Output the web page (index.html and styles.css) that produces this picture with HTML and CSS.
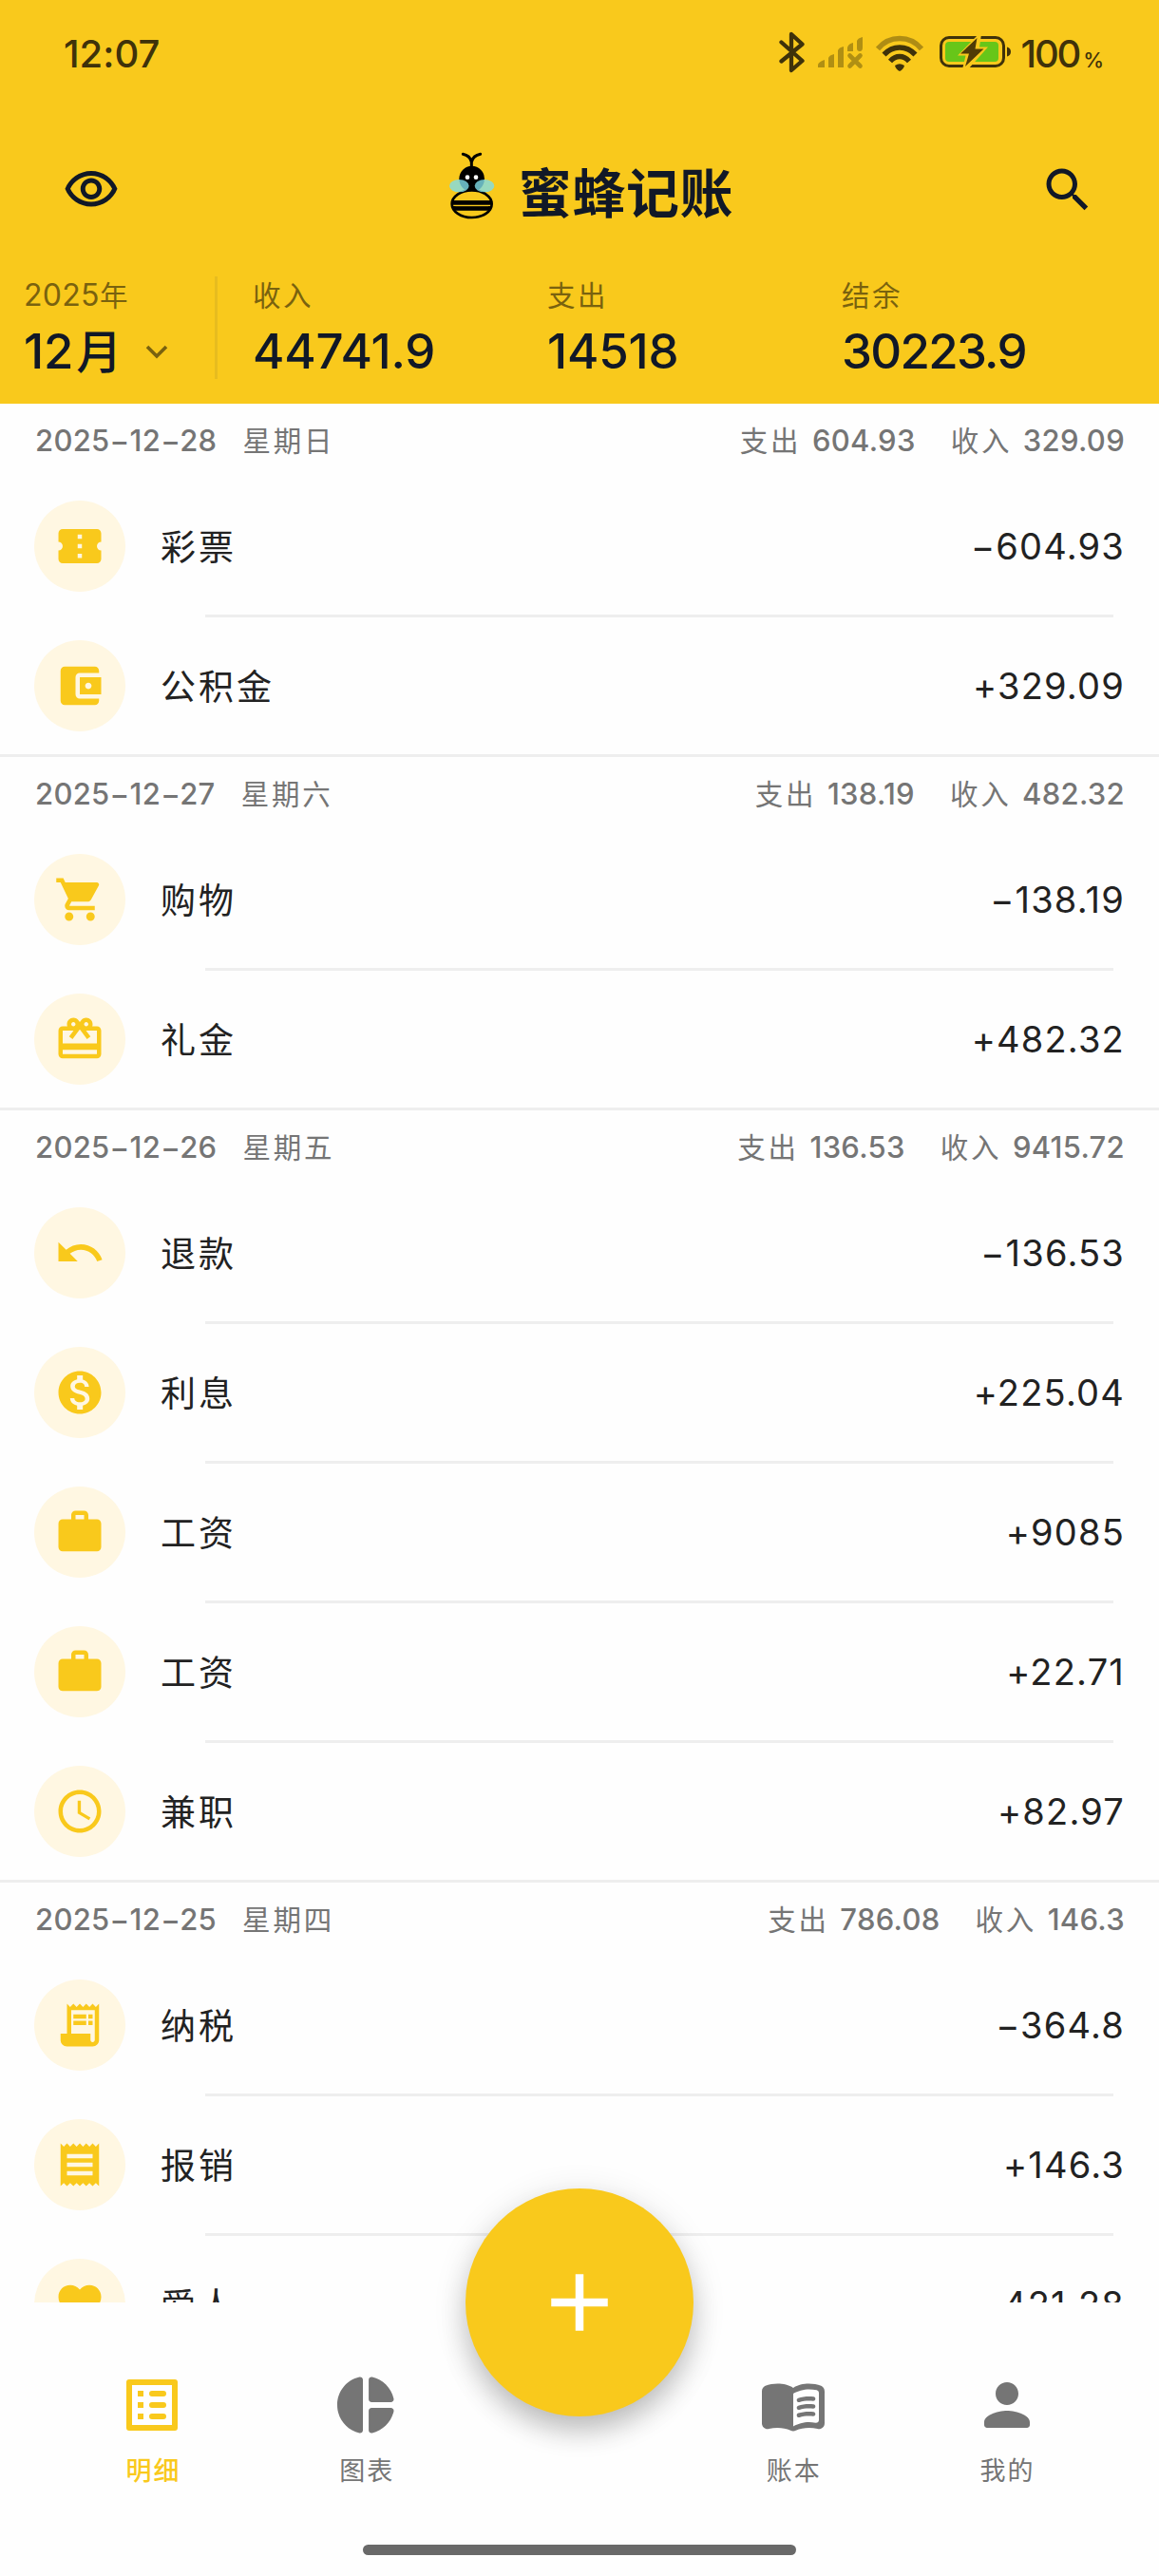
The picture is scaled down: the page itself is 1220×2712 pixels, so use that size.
FILE: index.html
```html
<!DOCTYPE html>
<html lang="zh-CN">
<head>
<meta charset="utf-8">
<title>蜜蜂记账</title>
<link rel="stylesheet" href="styles.css">
</head>
<body>
<svg class="sprite" aria-hidden="true">
  <symbol id="ticket" viewBox="0 0 24 24"><path d="M22 10V6c0-1.11-.9-2-2-2H4c-1.1 0-1.99.89-1.99 2v4c1.1 0 1.99.9 1.99 2s-.89 2-2 2v4c0 1.1.9 2 2 2h16c1.1 0 2-.9 2-2v-4c-1.1 0-2-.9-2-2s.9-2 2-2m-9 7.5h-2v-2h2zm0-4.5h-2v-2h2zm0-4.5h-2v-2h2z"/></symbol>
  <symbol id="wallet" viewBox="0 0 24 24"><path d="M21 18v1c0 1.1-.9 2-2 2H5c-1.11 0-2-.9-2-2V5c0-1.1.89-2 2-2h14c1.1 0 2 .9 2 2v1h-9c-1.11 0-2 .9-2 2v8c0 1.1.89 2 2 2zm-9-2h10V8H12zm4-2.5c-.83 0-1.5-.67-1.5-1.5s.67-1.5 1.5-1.5 1.5.67 1.5 1.5-.67 1.5-1.5 1.5"/></symbol>
  <symbol id="cart" viewBox="0 0 24 24"><path d="M7 18c-1.1 0-1.99.9-1.99 2S5.9 22 7 22s2-.9 2-2-.9-2-2-2M1 2v2h2l3.6 7.59-1.35 2.45c-.16.28-.25.61-.25.96 0 1.1.9 2 2 2h12v-2H7.42c-.14 0-.25-.11-.25-.25l.03-.12.9-1.63h7.45c.75 0 1.41-.41 1.75-1.03l3.58-6.49c.08-.14.12-.31.12-.48 0-.55-.45-1-1-1H5.21l-.94-2zm16 16c-1.1 0-1.99.9-1.99 2s.89 2 1.99 2 2-.9 2-2-.9-2-2-2"/></symbol>
  <symbol id="gift" viewBox="0 0 24 24"><path d="M20 6h-2.18c.11-.31.18-.65.18-1 0-1.66-1.34-3-3-3-1.05 0-1.96.54-2.5 1.35l-.5.67-.5-.68C10.96 2.54 10.05 2 9 2 7.34 2 6 3.34 6 5c0 .35.07.69.18 1H4c-1.11 0-1.99.89-1.99 2L2 19c0 1.11.89 2 2 2h16c1.11 0 2-.89 2-2V8c0-1.11-.89-2-2-2zm-5-2c.55 0 1 .45 1 1s-.45 1-1 1-1-.45-1-1 .45-1 1-1zM9 4c.55 0 1 .45 1 1s-.45 1-1 1-1-.45-1-1 .45-1 1-1zm11 15H4v-2h16v2zm0-5H4V8h5.08L7 10.83 8.62 12 11 8.76l1-1.36 1 1.36L15.38 12 17 10.83 14.92 8H20v6z"/></symbol>
  <symbol id="undo" viewBox="0 0 24 24"><path d="M12.5 8c-2.65 0-5.05.99-6.9 2.6L2 7v9h9l-3.62-3.62c1.39-1.16 3.16-1.88 5.12-1.88 3.54 0 6.55 2.31 7.6 5.5l2.37-.78C21.08 11.03 17.15 8 12.5 8"/></symbol>
  <symbol id="coin" viewBox="0 0 24 24"><path d="M12 2C6.48 2 2 6.48 2 12s4.48 10 10 10 10-4.48 10-10S17.52 2 12 2m1.41 16.09V20h-2.67v-1.93c-1.71-.36-3.16-1.46-3.27-3.4h1.96c.1 1.05.82 1.87 2.65 1.87 1.96 0 2.4-.98 2.4-1.59 0-.83-.44-1.61-2.67-2.14-2.48-.6-4.18-1.62-4.18-3.67 0-1.72 1.39-2.84 3.11-3.21V4h2.67v1.95c1.86.45 2.79 1.86 2.85 3.39H14.3c-.05-1.11-.64-1.87-2.22-1.87-1.5 0-2.4.68-2.4 1.64 0 .84.65 1.39 2.67 1.91s4.18 1.39 4.18 3.91c-.01 1.83-1.38 2.83-3.12 3.16"/></symbol>
  <symbol id="work" viewBox="0 0 24 24"><path d="M20 6h-4V4c0-1.11-.89-2-2-2h-4c-1.11 0-2 .89-2 2v2H4c-1.11 0-1.99.89-1.99 2L2 19c0 1.11.89 2 2 2h16c1.11 0 2-.89 2-2V8c0-1.11-.89-2-2-2m-6 0h-4V4h4z"/></symbol>
  <symbol id="clock" viewBox="0 0 24 24"><path d="M11.99 2C6.47 2 2 6.48 2 12s4.47 10 9.99 10C17.52 22 22 17.52 22 12S17.52 2 11.99 2M12 20c-4.42 0-8-3.58-8-8s3.58-8 8-8 8 3.58 8 8-3.58 8-8 8m.5-13H11v6l5.25 3.15.75-1.23-4.5-2.67z"/></symbol>
  <symbol id="receipt-long" viewBox="0 0 24 24"><path d="M19.5 3.5 18 2l-1.5 1.5L15 2l-1.5 1.5L12 2l-1.5 1.5L9 2 7.5 3.5 6 2v14H3v3c0 1.66 1.34 3 3 3h12c1.66 0 3-1.34 3-3V2zM19 19c0 .55-.45 1-1 1s-1-.45-1-1v-3H8V5h11z"/><path d="M9 7h6v2H9zM16 7h2v2h-2zM9 10h6v2H9zM16 10h2v2h-2z"/></symbol>
  <symbol id="receipt" viewBox="0 0 24 24"><path d="M18 17H6v-2h12zm0-4H6v-2h12zm0-4H6V7h12zM3 22l1.5-1.5L6 22l1.5-1.5L9 22l1.5-1.5L12 22l1.5-1.5L15 22l1.5-1.5L18 22l1.5-1.5L21 22V2l-1.5 1.5L18 2l-1.5 1.5L15 2l-1.5 1.5L12 2l-1.5 1.5L9 2 7.5 3.5 6 2 4.5 3.5 3 2z"/></symbol>
  <symbol id="heart" viewBox="0 0 24 24"><path d="m12 21.35-1.45-1.32C5.4 15.36 2 12.28 2 8.5 2 5.42 4.42 3 7.5 3c1.74 0 3.41.81 4.5 2.09C13.09 3.81 14.76 3 16.5 3 19.58 3 22 5.42 22 8.5c0 3.78-3.4 6.86-8.55 11.54z"/></symbol>
</svg>

<header class="header">
  <div class="status">
    <span class="status-time">12:07</span>
    <div class="status-icons">
      <svg class="bluetooth" viewBox="0 0 27 44"><path d="M2.500 11.500 24.500 31 13 41V3l11.500 10.500L2.500 31.500" fill="none" stroke="currentColor" stroke-width="4.300" stroke-linejoin="round" stroke-linecap="round"/></svg>
      <svg class="signal" viewBox="0 0 50 36"><path d="M1 29q1-3 7-5v8H1zM12 22q1-3 6-4v14h-6zM22 14q1-3 6-4v22h-6zM32 11q1-4 6-5v9h-6zM42 4q1-3 6-4v11q0 4-3 4t-3-3z"/><path d="m34.500 19.500 11 11m0-11-11 11" fill="none" stroke="currentColor" stroke-width="4.600" stroke-linecap="round"/></svg>
      <svg class="wifi" viewBox="0 0 50 38"><g fill="none" stroke="currentColor" stroke-width="5.500"><path opacity=".4" d="M2 14.500Q11 3.500 25 3.500T48 14.500"/><path d="M8.500 20.500Q15.500 13 25 13T41.500 20.500"/><path d="M15 27.500Q19.500 22.500 25 22.500t10 5"/></g><path d="M20 32q5-3.500 10 0-1 4-5 6-4-2-5-6"/></svg>
      <svg class="battery" viewBox="0 0 76 38"><rect x="1.500" y="3.500" width="66" height="30" rx="8.500" fill="none" stroke="currentColor" stroke-width="3"/><rect x="6" y="8" width="56" height="21" rx="4" fill="#67c619"/><path d="M71 13.500q4 1 4 5t-4 5z"/><path d="M41 0 19 22.500h8.500L24 37h6L51 13.500h-9L44 0z" fill="#f9c91c"/><path d="M39.500 4 22 20.500h9L27 34l19.500-18.500h-9z" fill="#4f3c06"/></svg>
      <span class="status-level">100<small>%</small></span>
    </div>
  </div>

  <div class="appbar">
    <svg class="appbar-icon" viewBox="0 0 24 24"><path d="M12 6c3.790 0 7.170 2.130 8.820 5.500C19.170 14.870 15.790 17 12 17s-7.170-2.130-8.820-5.500C4.830 8.130 8.210 6 12 6m0-2C7 4 2.730 7.110 1 11.500 2.730 15.890 7 19 12 19s9.270-3.110 11-7.500C21.270 7.110 17 4 12 4m0 5c1.380 0 2.500 1.120 2.500 2.500S13.380 14 12 14s-2.500-1.120-2.500-2.500S10.620 9 12 9m0-2c-2.480 0-4.500 2.020-4.500 4.500S9.520 16 12 16s4.500-2.020 4.500-4.500S14.480 7 12 7"/></svg>
    <div class="brand">
      <svg class="bee" viewBox="90 54 156 222">
        <path d="M142 67q22 4 27 25v14m0-14q5-21 28-25" fill="none" stroke="#000" stroke-width="9" stroke-linecap="round"/>
        <ellipse cx="170" cy="145" rx="40" ry="41"/>
        <circle cx="156" cy="140" r="7" fill="#fff"/><circle cx="183" cy="140" r="7" fill="#fff"/>
        <ellipse cx="170" cy="224" rx="63" ry="43" fill="#f9c91c" stroke="#000" stroke-width="8"/>
        <path d="M108 220h124M111 238h118" stroke="#000" stroke-width="14"/>
        <path d="M118 230h104" stroke="#f9c91c" stroke-width="2.500"/>
        <ellipse cx="130" cy="167" rx="31" ry="20" fill="#7fdde8" fill-opacity=".8"/>
        <ellipse cx="210" cy="167" rx="31" ry="20" fill="#7fdde8" fill-opacity=".8"/>
      </svg>
      <h1>蜜蜂记账</h1>
    </div>
    <svg class="appbar-icon" viewBox="0 0 24 24"><path d="M15.500 14h-.790l-.280-.270C15.410 12.590 16 11.110 16 9.500 16 5.910 13.090 3 9.500 3S3 5.910 3 9.500 5.910 16 9.500 16c1.610 0 3.090-.590 4.230-1.570l.270.280v.790l5 4.990L20.490 19zm-6 0C7.010 14 5 11.990 5 9.500S7.010 5 9.500 5 14 7.010 14 9.500 11.990 14 9.500 14"/></svg>
  </div>

  <div class="summary">
    <div class="month">
      <div class="label">2025<span class="zh">年</span></div>
      <div class="value">12<span class="zh">月</span><svg class="chevron" viewBox="0 0 24 15"><path d="m2 2 10 10L22 2" fill="none" stroke="currentColor" stroke-width="3.600"/></svg></div>
    </div>
    <div class="stat"><div class="label"><span class="zh">收入</span></div><div class="value">44741.9</div></div>
    <div class="stat"><div class="label"><span class="zh">支出</span></div><div class="value">14518</div></div>
    <div class="stat balance"><div class="label"><span class="zh">结余</span></div><div class="value">30223.9</div></div>
  </div>
</header>

<main class="list">
  <section class="day">
    <div class="day-head"><span>2025−12−28</span><span class="zh">星期日</span><div class="totals"><span><span class="zh">支出</span> 604.93</span><span><span class="zh">收入</span> 329.09</span></div></div>
    <div class="row"><i class="badge"><svg><use href="#ticket"/></svg></i><span class="name">彩票</span><span class="amount">−604.93</span></div>
    <div class="row"><i class="badge"><svg><use href="#wallet"/></svg></i><span class="name">公积金</span><span class="amount">+329.09</span></div>
  </section>
  <section class="day">
    <div class="day-head"><span>2025−12−27</span><span class="zh">星期六</span><div class="totals"><span><span class="zh">支出</span> 138.19</span><span><span class="zh">收入</span> 482.32</span></div></div>
    <div class="row"><i class="badge"><svg><use href="#cart"/></svg></i><span class="name">购物</span><span class="amount">−138.19</span></div>
    <div class="row"><i class="badge"><svg><use href="#gift"/></svg></i><span class="name">礼金</span><span class="amount">+482.32</span></div>
  </section>
  <section class="day">
    <div class="day-head"><span>2025−12−26</span><span class="zh">星期五</span><div class="totals"><span><span class="zh">支出</span> 136.53</span><span><span class="zh">收入</span> 9415.72</span></div></div>
    <div class="row"><i class="badge"><svg><use href="#undo"/></svg></i><span class="name">退款</span><span class="amount">−136.53</span></div>
    <div class="row"><i class="badge"><svg><use href="#coin"/></svg></i><span class="name">利息</span><span class="amount">+225.04</span></div>
    <div class="row"><i class="badge"><svg><use href="#work"/></svg></i><span class="name">工资</span><span class="amount">+9085</span></div>
    <div class="row"><i class="badge"><svg><use href="#work"/></svg></i><span class="name">工资</span><span class="amount">+22.71</span></div>
    <div class="row"><i class="badge"><svg><use href="#clock"/></svg></i><span class="name">兼职</span><span class="amount">+82.97</span></div>
  </section>
  <section class="day">
    <div class="day-head"><span>2025−12−25</span><span class="zh">星期四</span><div class="totals"><span><span class="zh">支出</span> 786.08</span><span><span class="zh">收入</span> 146.3</span></div></div>
    <div class="row"><i class="badge"><svg><use href="#receipt-long"/></svg></i><span class="name">纳税</span><span class="amount">−364.8</span></div>
    <div class="row"><i class="badge"><svg><use href="#receipt"/></svg></i><span class="name">报销</span><span class="amount">+146.3</span></div>
    <div class="row"><i class="badge"><svg><use href="#heart"/></svg></i><span class="name">爱人</span><span class="amount">−421.28</span></div>
  </section>
</main>

<nav class="tabbar">
  <div class="tabs">
    <a class="tab active"><svg viewBox="0 0 24 24"><path fill-rule="evenodd" d="M4 3h16q1 0 1 1v16q0 1-1 1H4q-1 0-1-1V4q0-1 1-1m1 2v14h14V5z"/><path d="M7 7h2v2H7zM7 11h2v2H7zM7 15h2v2H7z"/><path d="M12 8h4m-4 4h4m-4 4h4" stroke="currentColor" stroke-width="2" stroke-linecap="round"/></svg><span>明细</span></a>
    <a class="tab"><svg viewBox="0 0 24 24"><path d="M11 3.180v17.640c0 .640-.590 1.120-1.210.980C5.320 20.800 2 16.790 2 12s3.320-8.800 7.790-9.800c.620-.140 1.210.340 1.210.980m2.030 0v6.810c0 .550.450 1 1 1h6.790c.640 0 1.120-.590.980-1.220-.850-3.760-3.800-6.720-7.550-7.570-.630-.140-1.220.340-1.220.980m0 10.830v6.810c0 .640.590 1.120 1.220.980 3.760-.850 6.710-3.820 7.560-7.580.140-.620-.350-1.220-.980-1.220h-6.790c-.560.010-1.010.460-1.010 1.010"/></svg><span>图表</span></a>
    <button class="fab" aria-label="记一笔"><svg viewBox="0 0 24 24"><path d="M19 13h-6v6h-2v-6H5v-2h6V5h2v6h6z"/></svg></button>
    <a class="tab"><svg viewBox="0 0 24 24"><path d="M17.500 4.500c-1.950 0-4.050.400-5.500 1.500-1.450-1.100-3.550-1.500-5.500-1.500-1.450 0-2.990.220-4.280.790C1.490 5.610 1 6.330 1 7.130v11.280c0 1.300 1.220 2.260 2.480 1.940.980-.250 2.020-.350 3.020-.350 1.560 0 3.220.260 4.560.920.600.300 1.280.300 1.870 0 1.340-.670 3-.920 4.560-.920 1 0 2.040.100 3.020.350 1.260.330 2.480-.630 2.480-1.940V7.130c0-.810-.490-1.520-1.220-1.840-1.280-.570-2.820-.790-4.270-.790M21 17.230c0 .630-.580 1.090-1.200.980-.750-.140-1.530-.200-2.300-.200-1.700 0-4.150.650-5.500 1.500V8c1.350-.850 3.800-1.500 5.500-1.500.920 0 1.830.090 2.700.280.460.100.800.510.800.980z"/><path id="ln" d="M13.980 11.010c-.320 0-.610-.200-.710-.520-.130-.390.090-.820.480-.940 1.540-.500 3.530-.660 5.360-.450.410.050.710.420.660.830s-.420.710-.830.660c-1.620-.190-3.390-.040-4.730.390-.080.010-.160.030-.230.030"/><use href="#ln" y="2.660"/><use href="#ln" y="5.320"/></svg><span>账本</span></a>
    <a class="tab"><svg viewBox="0 0 24 24"><path d="M12 12c2.210 0 4-1.790 4-4s-1.790-4-4-4-4 1.790-4 4 1.790 4 4 4m0 2c-2.670 0-8 1.340-8 4v1c0 .550.450 1 1 1h14c.550 0 1-.450 1-1v-1c0-2.660-5.330-4-8-4"/></svg><span>我的</span></a>
  </div>
  <div class="home-indicator"></div>
</nav>
</body>
</html>
```

FILE: styles.css
```css
* { box-sizing: border-box; }

body {
  margin: 0;
  width: 1220px;
  height: 2712px;
  overflow: hidden;
  display: flex;
  flex-direction: column;
  background: #fefefe;
  color: #222;
  font-family: Inter, "Noto Sans CJK SC", sans-serif;
  font-feature-settings: "calt" 0;
}

svg { display: block; fill: currentColor; }
.sprite { display: none; }
.zh { font-family: "Noto Sans CJK SC", sans-serif; line-height: 1; }

/* Header */
.header {
  flex: none;
  height: 425px;
  background: #f9c91c;
  color: #111827;
}

.status {
  height: 112px;
  padding: 1px 58px 0 67px;
  display: flex;
  justify-content: space-between;
  align-items: center;
  color: #3f320a;
  font-size: 40px;
  font-weight: 500;
  line-height: 48px;
}
.status-icons { display: flex; align-items: center; }
.bluetooth { width: 27px; height: 44px; margin: -3px 13px 0 0; }
.signal { width: 50px; height: 36px; color: #b08f13; margin-right: 12px; }
.wifi { width: 50px; height: 38px; margin: -2px 17px 0 0; }
.battery { width: 76px; height: 38px; margin: -3px 9px 0 0; }
.status-level { display: flex; align-items: baseline; letter-spacing: -2.2px; }
.status-level small { font-size: 22px; margin-left: 4px; letter-spacing: 0; line-height: 1; }

.appbar {
  height: 176px;
  padding: 0 66px;
  display: grid;
  grid-template-columns: 60px 1fr 60px;
  align-items: center;
}
.appbar-icon { width: 60px; height: 60px; }
.brand {
  display: flex;
  justify-content: center;
  align-items: center;
  gap: 24px;
  padding-left: 22px;
}
.bee { width: 52px; height: 74px; margin-top: -10px; fill: #000; }
.brand h1 {
  margin: 0;
  font: 700 56px/80px "Noto Sans CJK SC", sans-serif;
  letter-spacing: 0.6px;
}

.summary {
  display: grid;
  grid-template-columns: 229px 310px 310px 1fr;
}
.month {
  height: 108px;
  margin-top: 3px;
  padding-left: 25px;
  border-right: 3px solid #e7bc1f;
}
.stat { margin-top: 3px; padding-left: 37px; }
.label {
  height: 40px;
  line-height: 40px;
  font-size: 32px;
  color: #79620f;
  white-space: nowrap;
}
.label .zh { font-size: 29.5px; letter-spacing: 2.5px; }
.month .label { letter-spacing: 0.3px; }
.value {
  height: 60px;
  margin-top: 9px;
  line-height: 60px;
  font-size: 51px;
  font-weight: 500;
  letter-spacing: -0.2px;
  white-space: nowrap;
}
.balance .value { letter-spacing: -1.7px; }
.month .value { display: flex; align-items: baseline; }
.value .zh { font-size: 48px; margin-left: 3px; }
.chevron { width: 24px; height: 15px; margin-left: 25px; align-self: center; color: #79620f; }

/* Transactions */
.list { flex: none; height: 1999px; overflow: hidden; }
.day { border-bottom: 3px solid #eee; }
.day-head {
  height: 78px;
  padding: 0 36px 0 37px;
  display: flex;
  align-items: baseline;
  line-height: 77px;
  color: #757575;
  font-size: 31px;
  font-weight: 500;
  letter-spacing: 0.3px;
  white-space: pre;
}
.day-head .zh { font-size: 29.5px; font-weight: 400; letter-spacing: 2.8px; }
.day-head > .zh { margin-left: 27px; }
.totals { margin-left: auto; display: flex; gap: 37px; word-spacing: 3px; }

.row {
  position: relative;
  height: 147px;
  padding: 0 36px 3px;
  display: flex;
  align-items: center;
}
.row:last-child { height: 144px; padding-bottom: 0; }
.row:not(:last-child)::after {
  content: "";
  position: absolute;
  left: 216px;
  right: 48px;
  bottom: 0;
  height: 3px;
  background: #eee;
}
.badge {
  width: 96px;
  height: 96px;
  border-radius: 50%;
  background: #fff7e2;
  color: #f9c91c;
  display: grid;
  place-items: center;
}
.badge svg { width: 54px; height: 54px; }
.name {
  margin: 0 0 2px 37px;
  font: 400 37px/60px "Noto Sans CJK SC", sans-serif;
  letter-spacing: 3px;
}
.amount {
  margin-left: auto;
  font-size: 38px;
  line-height: 60px;
  letter-spacing: 1.2px;
}

/* Bottom bar */
.tabbar { position: relative; height: 288px; color: #757575; }
.tabs {
  height: 255px;
  padding: 72px 48px 0;
  display: grid;
  grid-template-columns: repeat(5, minmax(0, 1fr));
  justify-items: center;
}
.tab { display: flex; flex-direction: column; align-items: center; }
.tab svg { width: 72px; height: 72px; }
.tab span {
  margin-top: 12px;
  padding-left: 2px;
  font: 400 27px/40px "Noto Sans CJK SC", sans-serif;
  letter-spacing: 2px;
}
.tab.active { color: #f9c91c; }
.tab.active span { font-weight: 500; }
.fab {
  width: 240px;
  height: 240px;
  margin: -192px -8px 0;
  padding: 0;
  border: 0;
  border-radius: 50%;
  background: #f9c91c;
  color: #fff;
  display: grid;
  place-items: center;
  position: relative;
  box-shadow: 0 18px 30px -3px rgba(0, 0, 0, .2), 0 6px 36px rgba(0, 0, 0, .12);
}
.fab svg { width: 102px; height: 102px; }
.home-indicator {
  width: 456px;
  height: 11px;
  margin: 0 auto;
  border-radius: 6px;
  background: #696969;
}
```
